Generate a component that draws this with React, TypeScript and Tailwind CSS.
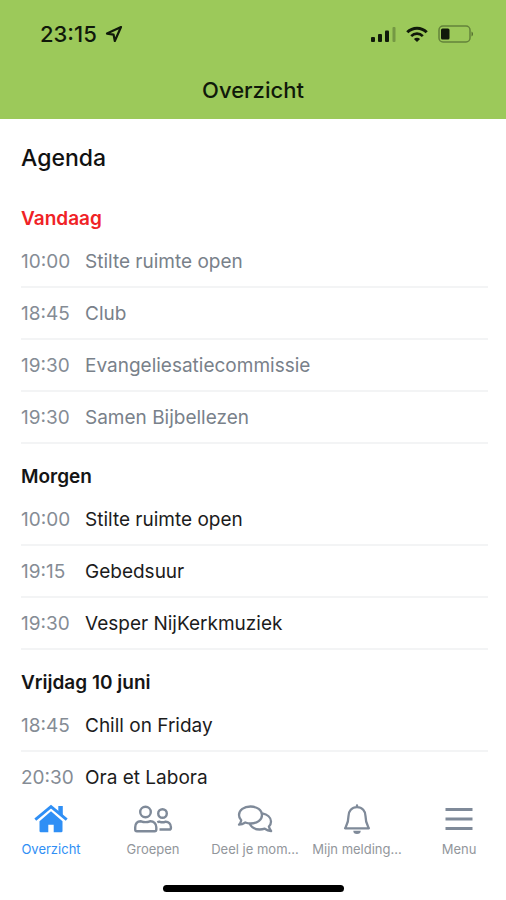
import type { ReactNode } from "react";

type Item = { time: string; title: string };
type Day = { label: string; today?: boolean; items: Item[] };

const days: Day[] = [
  {
    label: "Vandaag",
    today: true,
    items: [
      { time: "10:00", title: "Stilte ruimte open" },
      { time: "18:45", title: "Club" },
      { time: "19:30", title: "Evangeliesatiecommissie" },
      { time: "19:30", title: "Samen Bijbellezen" },
    ],
  },
  {
    label: "Morgen",
    items: [
      { time: "10:00", title: "Stilte ruimte open" },
      { time: "19:15", title: "Gebedsuur" },
      { time: "19:30", title: "Vesper NijKerkmuziek" },
    ],
  },
  {
    label: "Vrijdag 10 juni",
    items: [
      { time: "18:45", title: "Chill on Friday" },
      { time: "20:30", title: "Ora et Labora" },
    ],
  },
];

function StatusBar() {
  return (
    <div className="flex h-9 items-center justify-between pr-8 pl-10 text-[#10190a]">
      <div className="flex items-center gap-2">
        <span className="text-[22px] leading-7 font-medium">23:15</span>
        <svg width="18" height="18" viewBox="0 0 18 18" fill="none" stroke="currentColor" strokeWidth="2.200" strokeLinejoin="round" aria-hidden="true">
          <path d="M16 2 2 8.600l6.600 1 1.200 6.400Z" />
        </svg>
      </div>
      <div className="flex items-center gap-[10px]">
        <svg width="26" height="17" viewBox="0 0 26 17" fill="currentColor" aria-label="Signaal">
          <rect x="1" y="11" width="4" height="5" rx="1" />
          <rect x="8" y="8" width="4" height="8" rx="1" />
          <rect x="15" y="4.500" width="4" height="11.500" rx="1" />
          <rect x="22.500" y="1" width="3" height="15" rx="1" opacity=".28" />
        </svg>
        <svg width="22" height="17" viewBox="0 0 22 17" fill="none" stroke="currentColor" strokeWidth="3" aria-label="Wifi">
          <path d="M1.300 6.300C6.700.8 15.300.8 20.700 6.300" />
          <path d="M5.200 10.100c3.200-3.200 8.400-3.200 11.600 0" strokeWidth="2.700" />
          <path d="M11 16 7.900 12.900c1.700-1.600 4.500-1.600 6.200 0Z" fill="currentColor" stroke="none" />
        </svg>
        <svg width="36" height="18" viewBox="0 0 36 18" fill="none" aria-label="Batterij">
          <rect x="1" y="1" width="31" height="16" rx="4" stroke="currentColor" strokeWidth="1.500" opacity=".4" />
          <rect x="3" y="3.500" width="8.500" height="11" rx="1.500" fill="currentColor" />
          <path d="M33.500 6.500c2 .8 2 4.200 0 5Z" fill="currentColor" opacity=".5" />
        </svg>
      </div>
    </div>
  );
}

function HomeIcon() {
  return (
    <svg width="36" height="32" viewBox="0 0 36 32" fill="currentColor" aria-hidden="true">
      <path d="M18 8.200 6.500 18.200V28a1.300 1.300 0 0 0 1.300 1.300H15.300v-7.500h5.400v7.500h7.500a1.300 1.300 0 0 0 1.300-1.300v-9.800Z" />
      <path d="m2.300 16.700 15.700-13 15.700 13" fill="none" stroke="currentColor" strokeWidth="2.900" />
      <path d="M25.300 3h4.500v10.500l-4.500-3.700Z" />
    </svg>
  );
}

function PeopleIcon() {
  return (
    <svg width="40" height="32" viewBox="0 0 40 32" fill="none" stroke="currentColor" strokeWidth="2.400" aria-hidden="true">
      <circle cx="12.500" cy="9" r="5.300" />
      <path d="M8 18.300c2.600 1 6.400 1 9 0 3.800-.2 6.300 2.400 6.300 6v2.300c0 1-.8 1.700-1.700 1.700H3.900c-.9 0-1.700-.7-1.700-1.700v-2.300c0-3.600 2-6.200 5.800-6Z" />
      <circle cx="29.500" cy="10.500" r="4.300" />
      <path d="M24.300 19.200c.8-.4 1.700-.5 2.500-.4 1.700.6 3.700.6 5.400 0 3.300-.3 5.700 2 5.700 5.300v.8c0 .9-.7 1.600-1.600 1.600h-9.800" />
    </svg>
  );
}

function ChatIcon() {
  return (
    <svg width="36" height="32" viewBox="0 0 36 32" fill="none" stroke="currentColor" strokeWidth="2.300" strokeLinejoin="round" aria-hidden="true">
      <path d="M13.500 3.500c6.600 0 11.500 3.600 11.500 8.500s-4.900 8.500-11.500 8.500c-1.900 0-3.700-.4-5.200-1-1.800 1.200-3.900 2.100-6.300 2.200 1.200-1.300 2-2.800 2.200-4.400C2.800 15.900 2 14 2 12c0-4.900 4.900-8.500 11.500-8.500Z" />
      <path d="M25.300 10.400c5 .9 8.700 4.100 8.700 8.100 0 1.900-.8 3.700-2.100 5 .3 1.600 1.100 3.200 2.200 4.500-2.400-.2-4.600-1.100-6.300-2.300-1.600.5-3.200.8-5.100.8-4.700 0-8.400-2.200-9.900-5.600" />
    </svg>
  );
}

function BellIcon() {
  return (
    <svg width="30" height="32" viewBox="0 0 30 32" fill="none" stroke="currentColor" strokeWidth="2.300" strokeLinejoin="round" strokeLinecap="round" aria-hidden="true">
      <path d="M15 4.200c-5.300 0-8.500 3.900-8.500 8.800 0 6.600-1.300 8.200-3.400 12.300h23.800c-2.100-4.100-3.400-5.700-3.400-12.300 0-4.900-3.200-8.800-8.500-8.800ZM15 4V2.300" />
      <path d="M11.300 27.700h7.400a3.700 3.200 0 0 1-7.400 0Z" fill="currentColor" stroke="none" />
    </svg>
  );
}

function MenuIcon() {
  return (
    <svg width="28" height="32" viewBox="0 0 28 32" stroke="currentColor" strokeWidth="3" aria-hidden="true">
      <path d="M.5 6.500h27M.5 16h27M.5 25.500h27" />
    </svg>
  );
}

function Tab({ label, icon, active }: { label: string; icon: ReactNode; active?: boolean }) {
  return (
    <a
      href="#"
      aria-current={active ? "page" : undefined}
      className={`flex flex-1 flex-col items-center gap-1 whitespace-nowrap ${active ? "text-[#2f8ff5]" : "text-[#7f8a99]"}`}
    >
      {icon}
      <span className={`text-[13px] leading-5 ${active ? "" : "text-[#92969b]"}`}>{label}</span>
    </a>
  );
}

function DaySection({ day }: { day: Day }) {
  return (
    <section>
      <h2 className={`pt-5 pb-1 text-[19px] leading-[26px] font-semibold ${day.today ? "text-[#f02226]" : "text-[#151515]"}`}>
        {day.label}
      </h2>
      <ul>
        {day.items.map((item, i) => (
          <li key={i} className="flex h-[52px] items-center border-b-2 border-[#f3f4f5] pt-0.5 text-[19px] leading-7">
            <time className="w-16 shrink-0 text-[#858c95]">{item.time}</time>
            <span className={day.today ? "text-[#79818a]" : "text-[#1c1c1c]"}>{item.title}</span>
          </li>
        ))}
      </ul>
    </section>
  );
}

export default function App() {
  return (
    <div className="flex h-screen flex-col overflow-hidden bg-white font-['Inter','Liberation_Sans',sans-serif]">
      <header className="shrink-0 bg-[#9cc95a] pt-4 pb-[13px]">
        <StatusBar />
        <h1 className="pt-[22px] text-center text-[22px] leading-8 font-medium text-[#10190a]">Overzicht</h1>
      </header>
      <main className="min-h-0 flex-1 overflow-hidden pr-[18px] pl-[21px]">
        <h2 className="pt-6 pb-[13px] text-[23px] leading-[30px] font-medium text-[#111111]">Agenda</h2>
        {days.map((day) => (
          <DaySection key={day.label} day={day} />
        ))}
      </main>
      <footer className="shrink-0 bg-white pt-2">
        <nav className="-mr-1 flex">
          <Tab label="Overzicht" icon={<HomeIcon />} active />
          <Tab label="Groepen" icon={<PeopleIcon />} />
          <Tab label="Deel je mom..." icon={<ChatIcon />} />
          <Tab label="Mijn melding..." icon={<BellIcon />} />
          <Tab label="Menu" icon={<MenuIcon />} />
        </nav>
        <div className="mx-auto mt-[26px] mb-2 h-[7px] w-[181px] rounded-full bg-black" />
      </footer>
    </div>
  );
}
